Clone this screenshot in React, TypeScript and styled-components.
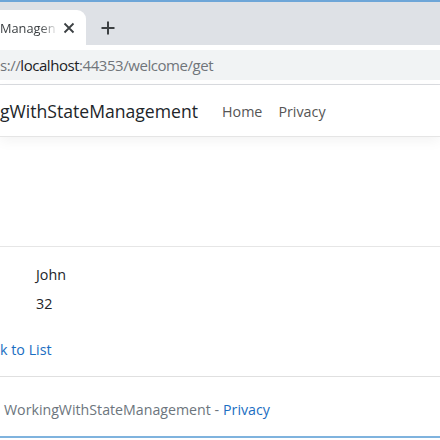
import React from "react";
import styled, { createGlobalStyle } from "styled-components";

const GlobalStyle = createGlobalStyle`
  html, body {
    margin: 0;
    padding: 0;
    background: #ffffff;
    font-family: "Open Sans", "Noto Sans", Arial, sans-serif;
  }
  #root {
    width: 440px;
    height: 440px;
    overflow: hidden;
  }
`;

const Frame = styled.div`
  width: 440px;
  height: 440px;
  display: flex;
  flex-direction: column;
  border-top: 2px solid #6ea6d8;
  box-sizing: border-box;
  overflow: hidden;
`;

const TabStrip = styled.div`
  height: 43px;
  background: #dee1e6;
  display: flex;
  align-items: flex-end;
  flex-shrink: 0;
`;

const Tab = styled.div`
  width: 86px;
  height: 35px;
  background: #ffffff;
  border-radius: 0 9px 0 0;
  display: flex;
  align-items: center;
  justify-content: space-between;
  padding-right: 11px;
  box-sizing: border-box;
  font-size: 12.8px;
  color: #3c4043;
`;

const TabTitle = styled.span`
  white-space: nowrap;
  -webkit-mask-image: linear-gradient(to right, #000 72%, rgba(0, 0, 0, 0.12));
  mask-image: linear-gradient(to right, #000 72%, rgba(0, 0, 0, 0.12));
`;

const NewTab = styled.div`
  height: 35px;
  width: 44px;
  display: flex;
  align-items: center;
  justify-content: center;
`;

const Toolbar = styled.div`
  height: 40px;
  background: #ffffff;
  border-bottom: 1px solid #dadce0;
  padding: 5px 0 4px;
  box-sizing: border-box;
  flex-shrink: 0;
`;

const UrlBox = styled.div`
  height: 30px;
  background: #f1f3f4;
  display: flex;
  align-items: center;
  font-size: 15px;
  letter-spacing: -0.45px;
  color: #70757a;
  white-space: nowrap;
`;

const Host = styled.span`
  color: #202124;
`;

const Navbar = styled.nav`
  height: 52px;
  display: flex;
  align-items: center;
  padding-top: 1px;
  background: #ffffff;
  border-bottom: 1px solid #e5e5e5;
  box-shadow: 0 4px 12px rgba(0, 0, 0, 0.05);
  box-sizing: border-box;
  flex-shrink: 0;
  white-space: nowrap;
`;

const Brand = styled.span`
  font-size: 17.6px;
  color: #212529;
  margin-right: 24px;
`;

const NavLink = styled.span`
  font-size: 14.3px;
  color: #555555;
  margin-right: 16px;
`;

const Main = styled.main`
  height: 239px;
  display: flex;
  flex-direction: column;
  flex-shrink: 0;
`;

const Rule = styled.hr<{ $top: number }>`
  margin: ${(p) => p.$top}px 0 0;
  border: 0;
  border-top: 1px solid #e6e6e6;
`;

const Row = styled.div`
  padding-left: 36px;
  font-size: 14.3px;
  color: #212529;
  height: 29px;
  display: flex;
  align-items: center;
`;

const BackLink = styled.a`
  margin-top: 22px;
  font-size: 14.3px;
  color: #1b6ec2;
  text-decoration: none;
`;

const Footer = styled.footer`
  border-top: 1px solid #e0e0e0;
  border-bottom: 2px solid #7fb3de;
  height: 62px;
  display: flex;
  align-items: center;
  padding: 5px 0 0 4px;
  box-sizing: border-box;
  font-size: 14.2px;
  color: #6c757d;
  white-space: nowrap;
  flex-shrink: 0;
`;

const FooterLink = styled.a`
  color: #1b6ec2;
  text-decoration: none;
  margin-left: 4px;
`;

const CloseIcon = () => (
  <svg width="12" height="12" viewBox="0 0 12 12">
    <path d="M1.5 1.5 L10.5 10.5 M10.5 1.5 L1.5 10.5" stroke="#3c4043" strokeWidth="1.8" />
  </svg>
);

const PlusIcon = () => (
  <svg width="14" height="14" viewBox="0 0 14 14">
    <path d="M7 0.5 V13.5 M0.5 7 H13.5" stroke="#3c4043" strokeWidth="2" />
  </svg>
);

export default function App() {
  return (
    <>
      <GlobalStyle />
      <Frame>
        <TabStrip>
          <Tab>
            <TabTitle>Managen</TabTitle>
            <CloseIcon />
          </Tab>
          <NewTab>
            <PlusIcon />
          </NewTab>
        </TabStrip>
        <Toolbar>
          <UrlBox>
            s://<Host>localhost</Host>:44353/welcome/get
          </UrlBox>
        </Toolbar>
        <Navbar>
          <Brand>gWithStateManagement</Brand>
          <NavLink>Home</NavLink>
          <NavLink>Privacy</NavLink>
        </Navbar>
        <Main>
          <Rule $top={109} />
          <Row style={{ marginTop: 13 }}>John</Row>
          <Row>32</Row>
          <BackLink href="#">k to List</BackLink>
        </Main>
        <Footer>
          WorkingWithStateManagement -<FooterLink href="#">Privacy</FooterLink>
        </Footer>
      </Frame>
    </>
  );
}
